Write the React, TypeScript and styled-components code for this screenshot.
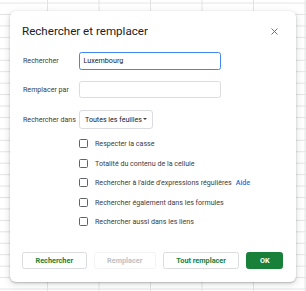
import React from 'react'
import styled, { createGlobalStyle } from 'styled-components'

const GlobalStyle = createGlobalStyle`
  html, body {
    margin: 0;
    padding: 0;
    height: 100%;
  }
  body {
    font-family: Roboto, "Liberation Sans", Arial, sans-serif;
    background-color: #fff;
    background-image:
      linear-gradient(to right, #e3e3e3 1px, transparent 1px),
      linear-gradient(to bottom, #e3e3e3 1px, transparent 1px);
    background-size: 51.5px 11.44px;
    background-position: 47px 0, 0 2.6px;
    overflow: hidden;
  }
`

const Dialog = styled.div`
  box-sizing: border-box;
  margin: 11px 0 0 10px;
  width: 286px;
  height: 271px;
  background: #fff;
  border-radius: 6px;
  box-shadow: 0 1px 2px rgba(60, 64, 67, 0.3), 0 2px 6px 1px rgba(60, 64, 67, 0.15);
  padding: 0 13px 13px 12px;
  display: flex;
  flex-direction: column;
`

const Header = styled.div`
  height: 40px;
  display: flex;
  align-items: center;
  justify-content: space-between;
`

const Title = styled.h1`
  margin: 0;
  font-size: 11.6px;
  font-weight: 400;
  color: #202124;
`

const CloseButton = styled.button`
  border: 0;
  background: none;
  padding: 0;
  margin-right: 4px;
  width: 10px;
  height: 10px;
  display: flex;
  align-items: center;
  justify-content: center;
  cursor: pointer;
`

const Form = styled.div`
  margin-top: 1px;
  display: flex;
  flex-direction: column;
`

const FieldRow = styled.div<{ $gap?: number }>`
  display: grid;
  grid-template-columns: 57px 1fr;
  align-items: center;
  margin-bottom: ${p => p.$gap ?? 0}px;
`

const Label = styled.span`
  font-size: 7.1px;
  color: #3c4043;
  padding-left: 1px;
  white-space: nowrap;
`

const TextField = styled.div<{ $focused?: boolean }>`
  box-sizing: border-box;
  width: 142px;
  height: 17.5px;
  border: ${p => (p.$focused ? '1.5px solid #4285f4' : '1px solid #dadce0')};
  border-radius: 2.5px;
  padding: 0 3.5px;
  display: flex;
  align-items: center;
  font-size: 7.2px;
  color: #202124;
`

const Select = styled.div`
  box-sizing: border-box;
  width: 74px;
  height: 19px;
  border: 1px solid #dadce0;
  border-radius: 3px;
  padding: 0 5px;
  display: flex;
  align-items: center;
  justify-content: space-between;
  font-size: 7.1px;
  color: #202124;
  white-space: nowrap;
`

const Caret = styled.span`
  width: 0;
  height: 0;
  border-left: 2.5px solid transparent;
  border-right: 2.5px solid transparent;
  border-top: 2.5px solid #3c4043;
`

const Options = styled.div`
  margin-top: 5.5px;
  padding-left: 57px;
  display: flex;
  flex-direction: column;
`

const OptionRow = styled.label`
  height: 19.5px;
  display: flex;
  align-items: center;
  gap: 7px;
  font-size: 7.1px;
  color: #3c4043;
  white-space: nowrap;
`

const Box = styled.span`
  box-sizing: border-box;
  width: 9px;
  height: 9px;
  border: 1.3px solid #5f6368;
  border-radius: 1.5px;
  flex: none;
`

const HelpLink = styled.a`
  color: #1a73e8;
  font-weight: 500;
  margin-left: 4px;
  text-decoration: none;
`

const Footer = styled.div`
  margin-top: auto;
  display: flex;
  gap: 7px;
`

const Button = styled.button<{ $variant?: 'primary' | 'disabled' }>`
  box-sizing: border-box;
  height: 17.5px;
  padding: 0 12.5px;
  border-radius: 2.5px;
  font-family: inherit;
  font-size: 7.3px;
  font-weight: 700;
  white-space: nowrap;
  border: 1px solid ${p => (p.$variant === 'primary' ? '#188038' : p.$variant === 'disabled' ? '#f1f3f4' : '#dadce0')};
  background: ${p => (p.$variant === 'primary' ? '#188038' : '#fff')};
  color: ${p => (p.$variant === 'primary' ? '#fff' : p.$variant === 'disabled' ? '#bdc1c6' : '#188038')};
  cursor: pointer;
`

const options = [
  'Respecter la casse',
  'Totalité du contenu de la cellule',
  "Rechercher à l'aide d'expressions régulières",
  'Rechercher également dans les formules',
  'Rechercher aussi dans les liens',
]

export default function App() {
  return (
    <>
      <GlobalStyle />
      <Dialog>
        <Header>
          <Title>Rechercher et remplacer</Title>
          <CloseButton aria-label="Fermer">
            <svg width="7" height="7" viewBox="0 0 14 14">
              <path d="M1 1L13 13M13 1L1 13" stroke="#5f6368" strokeWidth="1.8" />
            </svg>
          </CloseButton>
        </Header>
        <Form>
          <FieldRow $gap={11}>
            <Label>Rechercher</Label>
            <TextField $focused>Luxembourg</TextField>
          </FieldRow>
          <FieldRow $gap={11.5}>
            <Label>Remplacer par</Label>
            <TextField />
          </FieldRow>
          <FieldRow>
            <Label>Rechercher dans</Label>
            <Select>
              Toutes les feuilles
              <Caret />
            </Select>
          </FieldRow>
          <Options>
            {options.map((o, i) => (
              <OptionRow key={o}>
                <Box />
                <span>
                  {o}
                  {i === 2 && <HelpLink href="#">Aide</HelpLink>}
                </span>
              </OptionRow>
            ))}
          </Options>
        </Form>
        <Footer>
          <Button>Rechercher</Button>
          <Button $variant="disabled">Remplacer</Button>
          <Button>Tout remplacer</Button>
          <Button $variant="primary">OK</Button>
        </Footer>
      </Dialog>
    </>
  )
}
